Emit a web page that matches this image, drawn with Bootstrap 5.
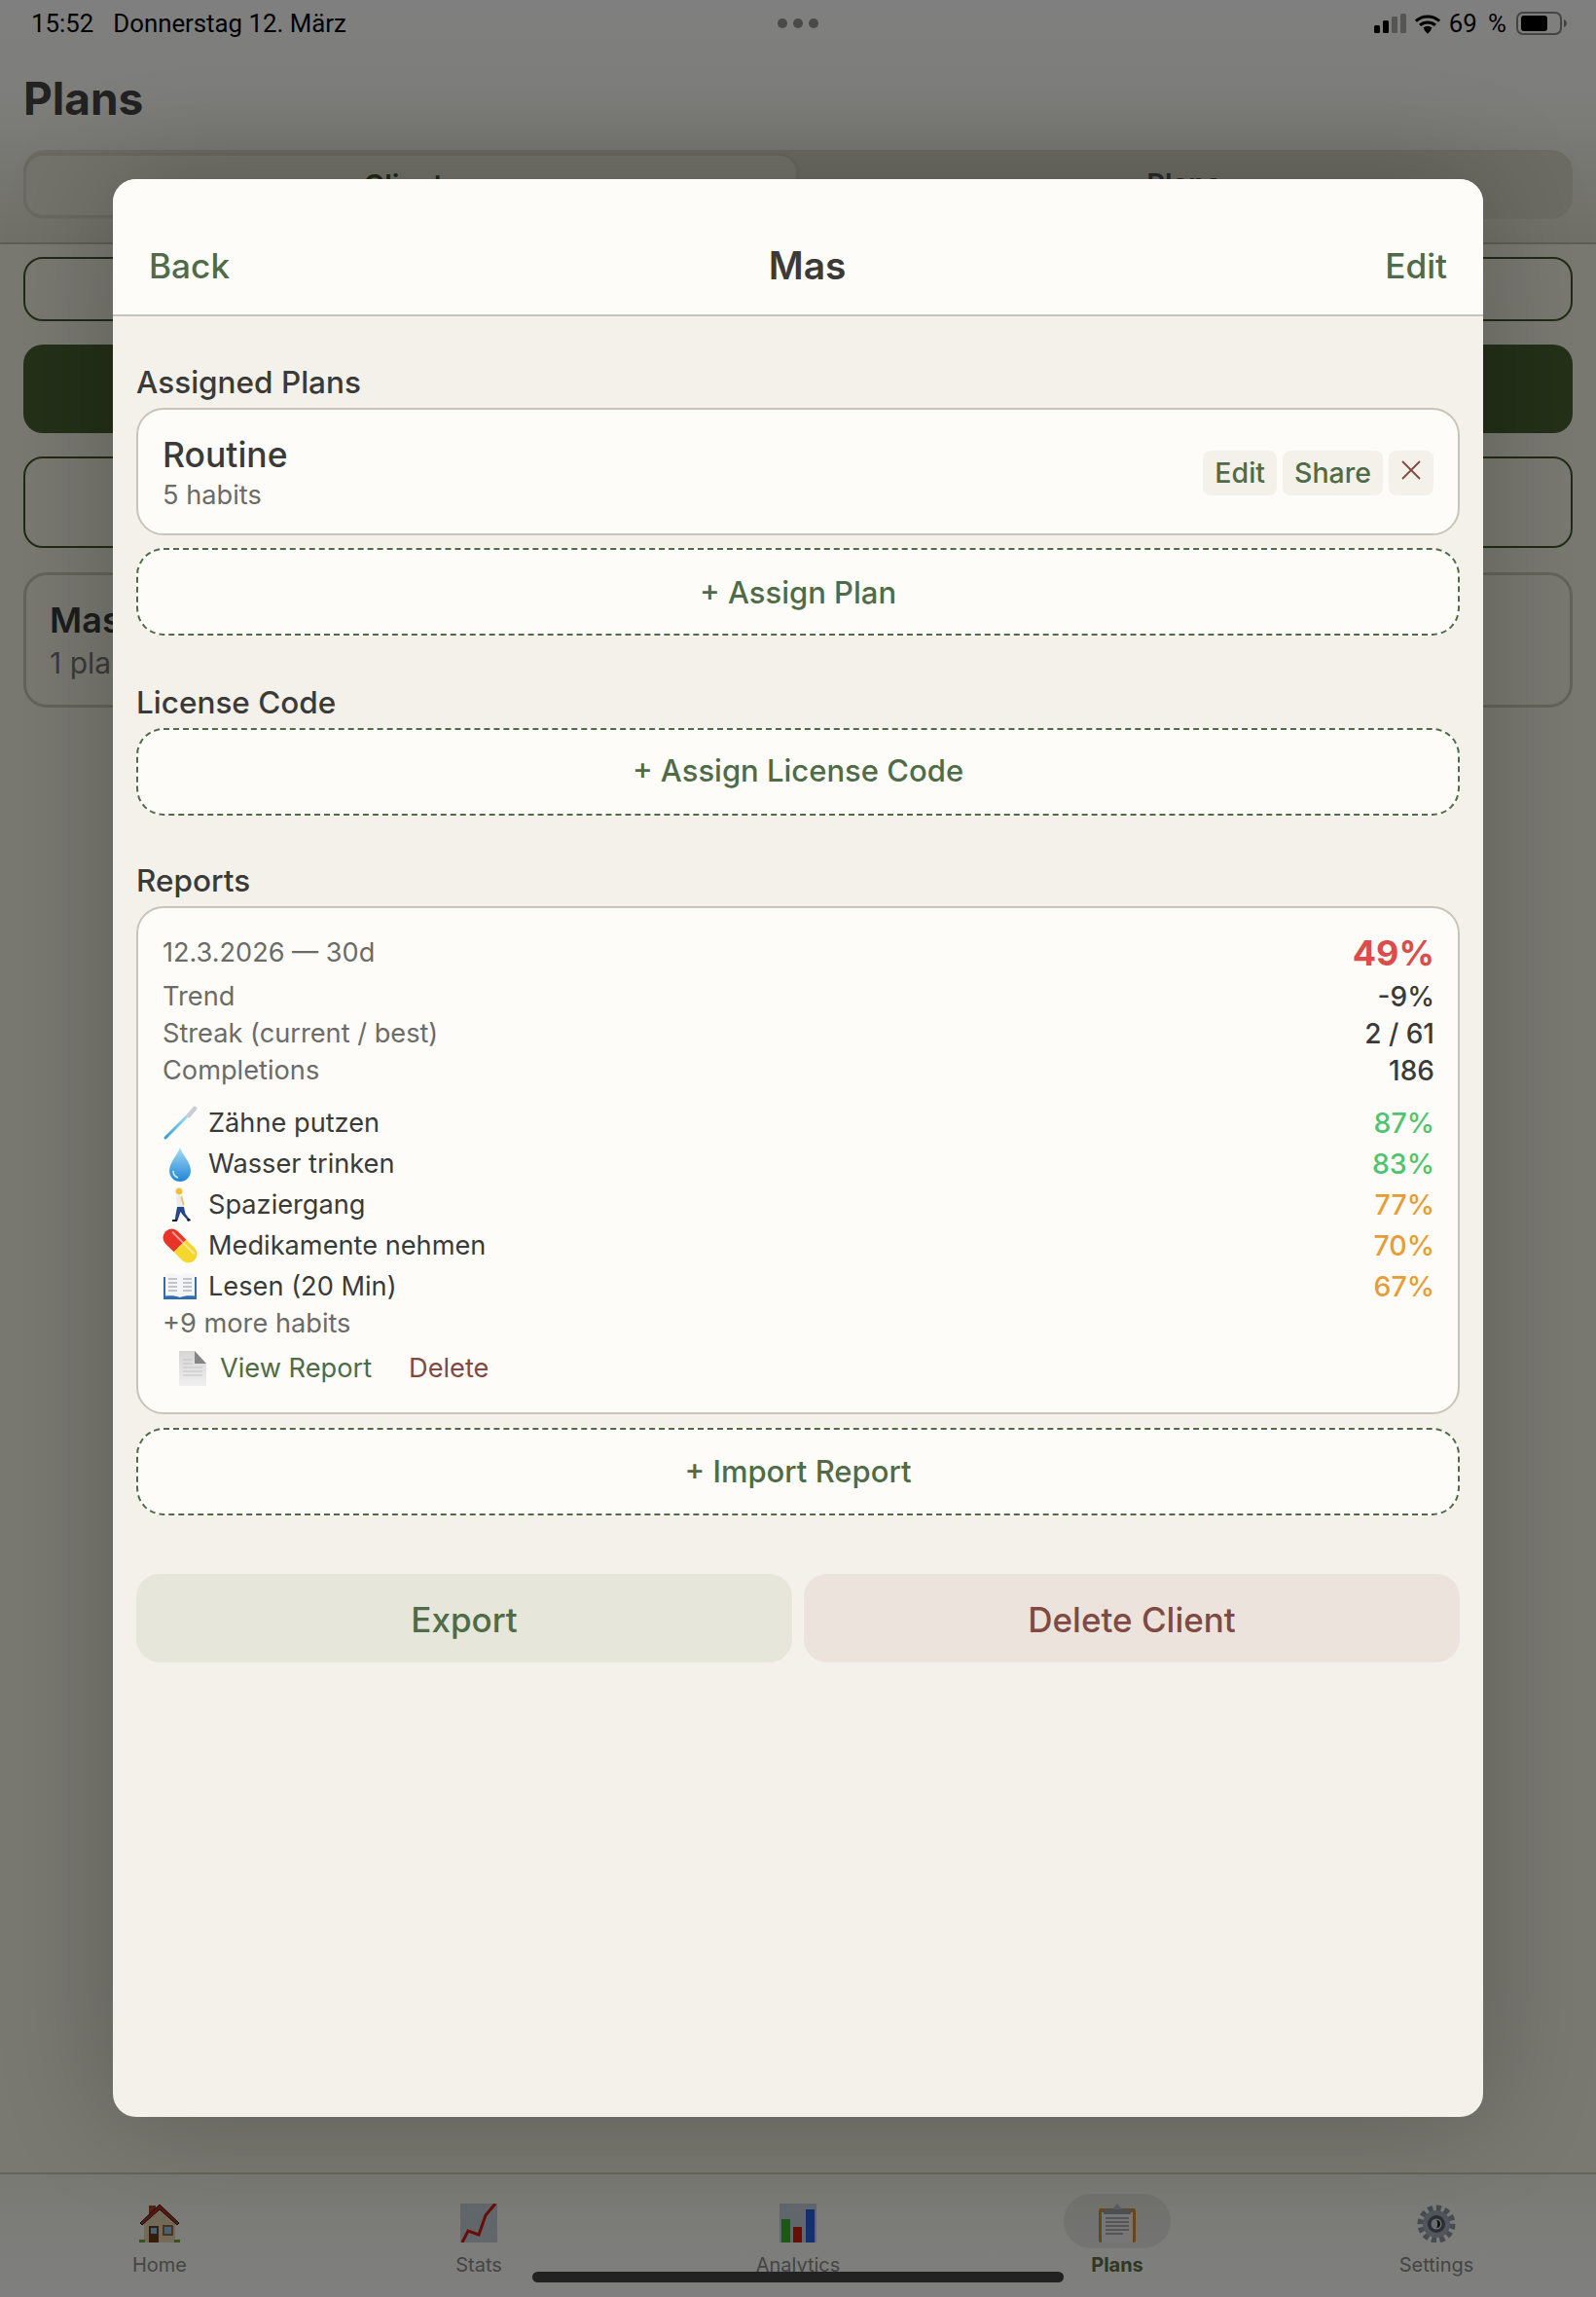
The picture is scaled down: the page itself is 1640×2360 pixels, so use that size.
<!doctype html>
<html lang="de">
<head>
    <meta charset="utf-8">
    <meta name="viewport" content="width=device-width, initial-scale=1">
    <title>Plans</title>
    <link href="https://cdn.jsdelivr.net/npm/bootstrap@5.3.3/dist/css/bootstrap.min.css" rel="stylesheet">
    <style>
        html, body { height: 100%; }
        body {
            font-family: Inter, "Liberation Sans", sans-serif;
            background: #f4f2ea;
            color: #3a3a38;
            overflow: hidden;
        }
        .screen { position: relative; width: 1640px; height: 2360px; overflow: hidden; }

        /* page behind the sheet */
        .app-head { height: 251px; background: linear-gradient(#ffffff, #fbfbf6 40%, #e0e0d0); border-bottom: 2px solid #bdbdac; padding: 0 24px; }
        .status-row { position: relative; z-index: 20; height: 48px; margin: 0 -24px; padding: 0 29px 0 32px; color: #000; font-size: 25.8px; font-family: Roboto, Inter, sans-serif; }
        .status-dots { position: absolute; left: 799px; top: 19px; display: flex; gap: 6px; }
        .status-dots i { width: 10px; height: 10px; border-radius: 50%; background: #4a4a48; }
        .status-pct { word-spacing: 5px; margin-right: 10px; }
        .page-title { font-size: 46px; font-weight: 700; line-height: 56px; margin: 25px 0 25px; color: #444; }
        .seg-wrap { height: 71px; background: #d8d8c8; border-radius: 22px; }
        .seg-tab { flex: 1 1 0; text-align: center; font-size: 29px; font-weight: 600; line-height: 60px; color: #42592f; }
        .seg-tab.on { margin: 3px 0 1px 0; background: #e6e6d6; border: 3px solid #d2d2c2; border-radius: 20px; }
        .seg-tab.off { color: #555; line-height: 70px; padding-right: 4px; }
        .app-main { background: #f2f2e4; padding: 13px 24px; }
        .back-btn { height: 66px; border: 2px solid #42592f; border-radius: 20px; margin-bottom: 24px; }
        .back-btn.solid { height: 91px; background: #486030; border: 0; }
        .back-btn.tall { height: 94px; margin-bottom: 25px; }
        .client-tile { height: 139px; border: 3px solid #c8c8b8; border-radius: 24px; padding: 24px 24px; }
        .client-tile h3 { font-size: 36px; font-weight: 600; margin: 0 0 3px; line-height: 44px; color: #3a3a38; }
        .client-tile p { font-size: 30px; margin: 0; line-height: 38px; color: #777; }
        .tabbar { height: 128px; background: linear-gradient(#f4f4e8, #ffffff); border-top: 2px solid #c8c8b2; }
        .tab-item { width: 328px; padding-top: 30px; text-align: center; font-size: 20px; color: #8a8a86; line-height: 26px; }
        .tab-item svg { display: block; margin: 0 auto 10px; width: 44px; height: 40px; }
        .tab-item.active { color: #587048; font-weight: 700; position: relative; }
        .tab-item.active::before { content: ""; position: absolute; left: 109px; top: 20px; width: 110px; height: 56px; background: #0d2a1b14; border-radius: 28px; }
        .tab-item.active svg { position: relative; }

        /* overlay + sheet */
        .dim-layer { position: absolute; inset: 0; z-index: 10; background: rgba(0,0,0,.5); padding: 184px 116px 185px; }
        .sheet { height: 100%; background: #f4f1ea; border-radius: 24px; overflow: hidden; box-shadow: 0 0 116px rgba(0,0,0,.24); }
        .sheet-top { background: #fdfcf8; border-bottom: 2px solid #c8c3b8; padding: 65px 37px 26px; line-height: 48px; }
        .sheet-top a { font-size: 35.2px; font-weight: 550; color: #4f6b47; text-decoration: none; }
        .sheet-top h2 { font-size: 39px; font-weight: 600; line-height: 48px; margin: 0; color: #3a3a38; }
        .sheet-body { padding: 48px 24px 0; }
        .sec-label { font-size: 31.5px; font-weight: 500; line-height: 40px; margin: 0 0 6px; color: #3a3a38; }
        .box-card { background: #fdfcf8; border: 2px solid #c8c4b8; border-radius: 28px; }
        .plan-card { padding: 25px 25px 20px; margin-bottom: 13px; }
        .plan-name { font-size: 35.5px; font-weight: 500; line-height: 44px; }
        .plan-sub { font-size: 27.2px; line-height: 38px; color: #6b6b68; }
        .mini-btn { height: 46px; padding: 0 12px; border: 0; border-radius: 8px; background: #f4f1ea; color: #4f6b47; font-size: 28.5px; font-weight: 500; line-height: 46px; }
        .mini-btn.close-x { width: 46px; padding: 0 0 6px; display: flex; align-items: center; justify-content: center; }
        .mini-row { gap: 6px; margin-top: -3px; }
        .dash-btn { display: block; width: 100%; height: 90px; padding-top: 4px; background: #fdfcf8; border: 2px dashed #4f6b47; border-radius: 28px; color: #4f6b47; font-size: 31px; font-weight: 550; margin-bottom: 49px; }
        .dash-btn.tight { margin-bottom: 47px; padding-top: 0; }
        .dash-btn.last { margin-bottom: 60px; padding-top: 1px; }
        .report-card { padding: 26px 24px 25px 25px; margin-bottom: 14px; }
        .rep-date { font-size: 27.1px; line-height: 40px; margin-bottom: 6px; color: #6b6b68; }
        .rep-total { font-size: 36px; font-weight: 700; color: #db4c4a; }
        .rep-stat { font-size: 27.2px; line-height: 38px; color: #6b6b68; }
        .rep-stat b { font-size: 28px; font-weight: 500; color: #3a3a38; }
        .habit-list { margin-top: 14px; }
        .habit-row { font-size: 27.2px; line-height: 42px; color: #3a3a38; }
        .habit-row svg { width: 36px; height: 36px; margin-right: 11px; flex: none; }
        .pct { font-size: 28.5px; font-weight: 500; }
        .pct-good { color: #4fc46e; }
        .pct-mid { color: #e89c36; }
        .more-line { font-size: 27.2px; line-height: 34px; color: #6b6b68; }
        .rep-links { margin-top: 9px; padding-left: 16px; font-size: 27.2px; line-height: 40px; }
        .rep-links svg { width: 30px; height: 36px; margin-right: 13px; }
        .rep-links a { color: #4f6b47; text-decoration: none; margin-right: 38px; }
        .rep-links a.del { color: #7f4a42; }
        .foot-row { gap: 12px; }
        .foot-btn { flex: 1 1 0; height: 91px; padding-top: 4px; border: 0; border-radius: 24px; font-size: 35px; font-weight: 550; }
        .foot-btn.green { background: #e6e6da; color: #4f6b47; }
        .foot-btn.red { background: #ece4dc; color: #7f4a42; }
        .home-bar { position: absolute; z-index: 20; left: 547px; top: 2334px; width: 546px; height: 11px; border-radius: 6px; background: #222; }
    </style>
</head>
<body>
<div class="screen">
    <div class="d-flex flex-column h-100">
        <header class="app-head">
            <div class="status-row d-flex align-items-center">
                <span>15:52</span><span class="ms-3 ps-1">Donnerstag 12. März</span>
                <div class="status-dots"><i></i><i></i><i></i></div>
                <div class="ms-auto d-flex align-items-center">
                    <svg width="33" height="20" viewBox="0 0 33 20"><rect x="0" y="12" width="6" height="8" rx="1.500" fill="#000"/><rect x="9" y="7" width="6" height="13" rx="1.500" fill="#000"/><rect x="18" y="3" width="6" height="17" rx="1.500" fill="#555"/><rect x="27" y="0" width="6" height="20" rx="1.500" fill="#555"/></svg>
                    <svg class="ms-2" width="28" height="21" viewBox="0 0 30 22"><path d="M2 8a19 19 0 0 1 26 0M6.500 12.500a13 13 0 0 1 17 0M11 16.500a7 7 0 0 1 8 0" fill="none" stroke="#000" stroke-width="3.200"/><path d="M15 22l-4-4.200a5.500 5.500 0 0 1 8 0z" fill="#000"/></svg>
                    <span class="status-pct ms-2">69 %</span>
                    <svg width="53" height="24" viewBox="0 0 53 24"><rect x="1" y="1" width="45" height="22" rx="6" fill="none" stroke="#444" stroke-width="2"/><rect x="5" y="4" width="27" height="16" rx="3" fill="#000"/><path d="M49 8c2 1 3 2.500 3 4s-1 3-3 4z" fill="#444"/></svg>
                </div>
            </div>
            <h1 class="page-title">Plans</h1>
            <div class="seg-wrap d-flex">
                <div class="seg-tab on">Clients</div>
                <div class="seg-tab off">Plans</div>
            </div>
        </header>
        <main class="app-main flex-grow-1">
            <div class="back-btn"></div>
            <div class="back-btn solid"></div>
            <div class="back-btn tall"></div>
            <div class="client-tile">
                <h3>Mas</h3>
                <p>1 plan</p>
            </div>
        </main>
        <nav class="tabbar d-flex">
            <div class="tab-item">
                <svg viewBox="0 0 44 40"><rect x="11" y="2" width="7" height="14" fill="#b5402a"/><path d="M6 18 22 4l16 14v22H6z" fill="#e8d4b0"/><path d="M2 20 22 1l20 19-2 2L22 6 4 22z" fill="#b5301f" stroke="#222" stroke-width="1"/><rect x="11" y="23" width="10" height="17" fill="#6b3a1c"/><rect x="13" y="25" width="6" height="6" fill="#8fc4ea"/><rect x="25" y="22" width="11" height="11" fill="#8f6b45"/><rect x="27" y="24" width="7" height="7" fill="#8fc4ea"/><rect x="1" y="37" width="6" height="3" fill="#6aa33a"/><rect x="37" y="37" width="6" height="3" fill="#6aa33a"/></svg>
                Home
            </div>
            <div class="tab-item">
                <svg viewBox="0 0 44 40"><rect x="3" y="0" width="38" height="40" fill="#c5ced8"/><path d="M5 40l6-12 11 4 7-20 10-12" fill="none" stroke="#d31a0e" stroke-width="3"/></svg>
                Stats
            </div>
            <div class="tab-item">
                <svg viewBox="0 0 44 40"><rect x="3" y="0" width="38" height="40" fill="#c5ced8"/><rect x="5" y="16" width="9" height="24" fill="#38b520"/><rect x="17" y="24" width="9" height="16" fill="#d31a0e"/><rect x="30" y="6" width="9" height="34" fill="#2a62d8"/></svg>
                Analytics
            </div>
            <div class="tab-item active">
                <svg viewBox="0 0 44 40"><rect x="3" y="5" width="38" height="35" rx="2" fill="#d08f3a"/><rect x="6" y="9" width="32" height="31" fill="#eee"/><path d="M10 15h24M10 19h24M10 23h24M10 27h24M10 31h18" stroke="#aaa" stroke-width="2"/><rect x="8" y="6" width="28" height="5" rx="1" fill="#9aa3ad"/><path d="M17 6l5-6 5 6z" fill="#b5bdc6"/></svg>
                Plans
            </div>
            <div class="tab-item">
                <svg viewBox="0 0 44 40"><circle cx="22" cy="21" r="16" fill="none" stroke="#8e99a6" stroke-width="7" stroke-dasharray="5 3.300"/><circle cx="22" cy="21" r="14" fill="#a4adb8"/><circle cx="22" cy="21" r="9" fill="#58616c"/><circle cx="22" cy="21" r="5.500" fill="#d6dbe0"/><path d="M22 17a4 4 0 0 1 0 8c1.500-2 1.500-6 0-8z" fill="#222"/></svg>
                Settings
            </div>
        </nav>
    </div>

    <div class="dim-layer">
        <div class="sheet">
            <div class="sheet-top d-flex justify-content-between align-items-center">
                <a href="#">Back</a>
                <h2>Mas</h2>
                <a href="#">Edit</a>
            </div>
            <div class="sheet-body">
                <p class="sec-label">Assigned Plans</p>
                <div class="box-card plan-card d-flex justify-content-between align-items-center">
                    <div>
                        <div class="plan-name">Routine</div>
                        <div class="plan-sub">5 habits</div>
                    </div>
                    <div class="mini-row d-flex">
                        <button class="mini-btn">Edit</button>
                        <button class="mini-btn">Share</button>
                        <button class="mini-btn close-x" aria-label="Remove"><svg width="22" height="22" viewBox="0 0 22 22"><path d="M2 2l18 18M20 2 2 20" stroke="#7f4a42" stroke-width="1.800"/></svg></button>
                    </div>
                </div>
                <button class="dash-btn">+ Assign Plan</button>

                <p class="sec-label">License Code</p>
                <button class="dash-btn tight">+ Assign License Code</button>

                <p class="sec-label">Reports</p>
                <div class="box-card report-card">
                    <div class="rep-date d-flex justify-content-between align-items-center">
                        <span>12.3.2026 — 30d</span><span class="rep-total">49%</span>
                    </div>
                    <div class="rep-stat d-flex justify-content-between"><span>Trend</span><b>-9%</b></div>
                    <div class="rep-stat d-flex justify-content-between"><span>Streak (current / best)</span><b>2 / 61</b></div>
                    <div class="rep-stat d-flex justify-content-between"><span>Completions</span><b>186</b></div>
                    <div class="habit-list">
                        <div class="habit-row d-flex align-items-center">
                            <svg viewBox="0 0 36 36"><defs><linearGradient id="brush" x1="0" y1="1" x2="1" y2="0"><stop offset="0" stop-color="#2f9fd8"/><stop offset="1" stop-color="#a8e0f5"/></linearGradient></defs><path d="M3 33 27 9" stroke="url(#brush)" stroke-width="3" stroke-linecap="round"/><path d="M27 10 33 3" stroke="#c9ced3" stroke-width="4.500" stroke-linecap="round"/></svg>
                            <span class="flex-grow-1">Zähne putzen</span><span class="pct pct-good">87%</span>
                        </div>
                        <div class="habit-row d-flex align-items-center">
                            <svg viewBox="0 0 36 36"><defs><linearGradient id="drop" x1="0" y1="0" x2="0" y2="1"><stop offset="0" stop-color="#a5dcf7"/><stop offset="1" stop-color="#1f86d4"/></linearGradient></defs><path d="M18 1c2 7 11 15 11 24a11 11 0 0 1-22 0C7 16 16 8 18 1z" fill="url(#drop)"/><path d="M11 25c0 3 2 6 5 7" fill="none" stroke="#d5f0fb" stroke-width="1.500"/></svg>
                            <span class="flex-grow-1">Wasser trinken</span><span class="pct pct-good">83%</span>
                        </div>
                        <div class="habit-row d-flex align-items-center">
                            <svg viewBox="0 0 36 36"><circle cx="17" cy="4" r="3.500" fill="#f0c040"/><path d="M14 8h7l1 13h-7z" fill="#e9ecf0"/><path d="M20 9l2.500 9-1.500.5-2.500-8z" fill="#f2c24a"/><path d="M15 20h7l1.500 7 4.500 6-2 1-5.500-6-2-3-3 9h-3z" fill="#27478c"/><path d="M10 33h5v2h-5zM25 33l3-1 1 2-3 1z" fill="#1c1c22"/></svg>
                            <span class="flex-grow-1">Spaziergang</span><span class="pct pct-mid">77%</span>
                        </div>
                        <div class="habit-row d-flex align-items-center">
                            <svg viewBox="0 0 36 36"><g transform="rotate(45 18 18)"><path d="M18 9H6a9 9 0 0 0 0 18h12z" fill="#e8352a"/><path d="M18 9h12a9 9 0 0 1 0 18H18z" fill="#f5d72e"/><path d="M3 13.500h30" stroke="#fff" stroke-opacity=".5" stroke-width="2" stroke-linecap="round"/></g></svg>
                            <span class="flex-grow-1">Medikamente nehmen</span><span class="pct pct-mid">70%</span>
                        </div>
                        <div class="habit-row d-flex align-items-center">
                            <svg viewBox="0 0 36 36"><path d="M1 8h34v23H1z" fill="#2f6fb0"/><path d="M3 5c5-1 11-1 15 1.500V29c-4-2-10-2-15-1.500zM33 5c-5-1-11-1-15 1.500V29c4-2 10-2 15-1.500z" fill="#f4f5f6"/><path d="M6 10h9M6 14h9M6 18h9M6 22h9M21 10h9M21 14h9M21 18h9M21 22h9" stroke="#b0b5ba" stroke-width="1.500"/></svg>
                            <span class="flex-grow-1">Lesen (20 Min)</span><span class="pct pct-mid">67%</span>
                        </div>
                    </div>
                    <div class="more-line">+9 more habits</div>
                    <div class="rep-links d-flex align-items-center">
                        <svg viewBox="0 0 30 36"><defs><linearGradient id="sheetgrad" x1="0" y1="0" x2="0" y2="1"><stop offset="0" stop-color="#d6d6d6"/><stop offset="1" stop-color="#efefef"/></linearGradient></defs><path d="M1 0h16l12 13v23H1z" fill="url(#sheetgrad)"/><path d="M17 0l12 13H17z" fill="#858585"/><path d="M5 9h9M5 13h10M5 17h20M5 21h20M5 25h20" stroke="#c2c2c2" stroke-width="1"/></svg>
                        <a href="#">View Report</a>
                        <a href="#" class="del">Delete</a>
                    </div>
                </div>
                <button class="dash-btn last">+ Import Report</button>
                <div class="foot-row d-flex">
                    <button class="foot-btn green">Export</button>
                    <button class="foot-btn red">Delete Client</button>
                </div>
            </div>
        </div>
    </div>
    <div class="home-bar"></div>
</div>
<script src="https://cdn.jsdelivr.net/npm/bootstrap@5.3.3/dist/js/bootstrap.bundle.min.js"></script>
</body>
</html>
